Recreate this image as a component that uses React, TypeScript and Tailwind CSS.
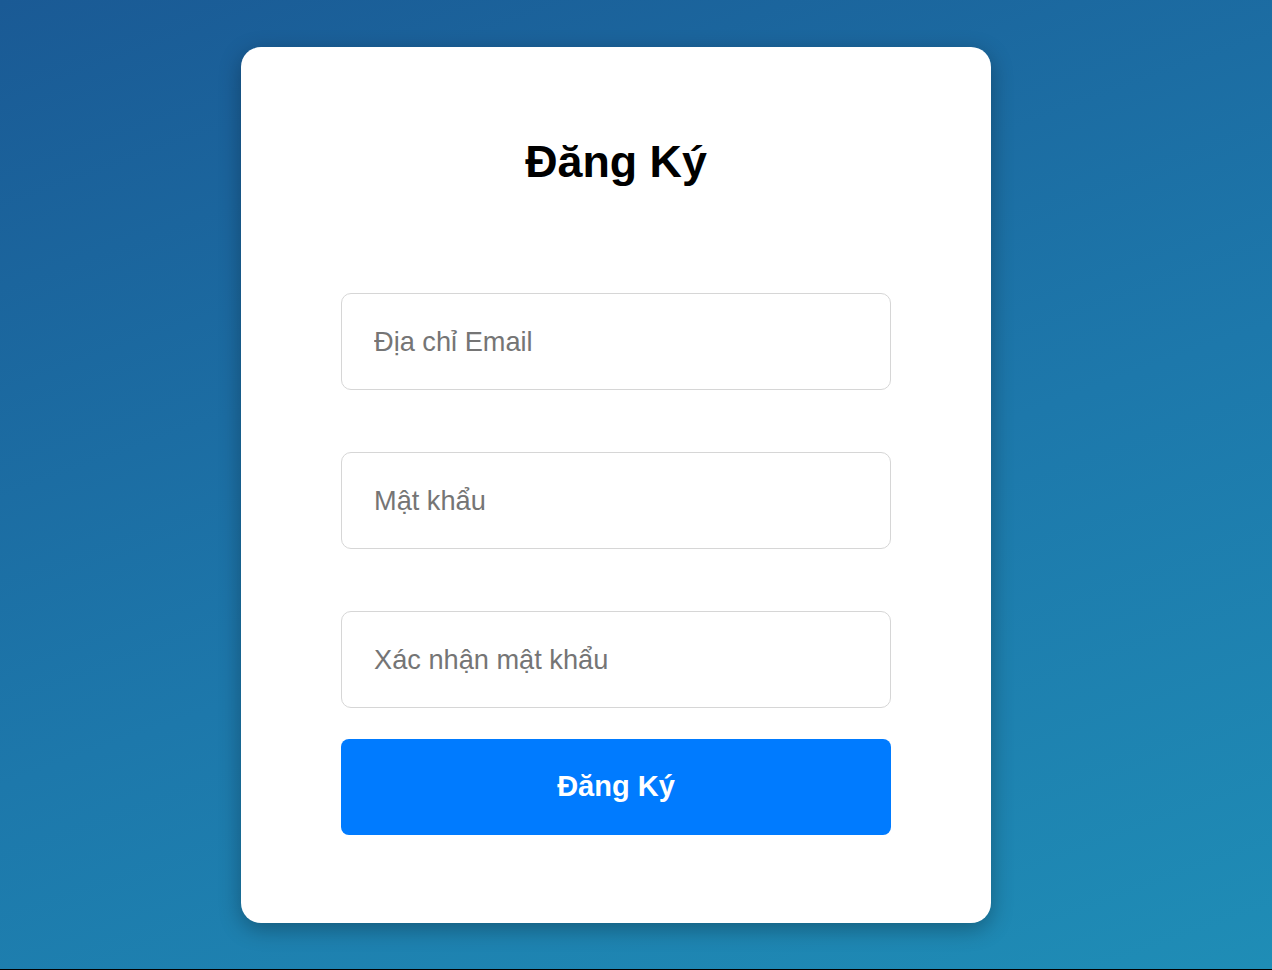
export default function App() {
  return (
    <div className="flex min-h-[970px] flex-col font-['Liberation_Sans',Arial,sans-serif]">
      <div className="h-[969px] bg-[linear-gradient(160deg,#1a5a95_0%,#1d78ab_55%,#1f8db6_100%)] pl-[241px] pt-[47px]">
        <div className="w-[750px] rounded-[20px] bg-white px-[100px] pb-[88px] pt-[90px] shadow-[0_6px_22px_rgba(0,0,0,0.3)]">
          <h1 className="text-center text-[44.8px] font-bold leading-[49px] text-black">Đăng Ký</h1>

          <form className="mt-[107px] flex flex-col" onSubmit={(e) => e.preventDefault()}>
            <input
              type="email"
              placeholder="Địa chỉ Email"
              className="h-[97px] w-full rounded-[10px] border border-[#d6d6d6] px-[32px] text-[27.2px] text-[#333] outline-none placeholder:text-[#757575]"
            />
            <input
              type="password"
              placeholder="Mật khẩu"
              className="mt-[62px] h-[97px] w-full rounded-[10px] border border-[#d6d6d6] px-[32px] text-[27.2px] text-[#333] outline-none placeholder:text-[#757575]"
            />
            <input
              type="password"
              placeholder="Xác nhận mật khẩu"
              className="mt-[62px] h-[97px] w-full rounded-[10px] border border-[#d6d6d6] px-[32px] text-[27.2px] text-[#333] outline-none placeholder:text-[#757575]"
            />
            <button
              type="submit"
              className="mt-[31px] h-[96px] w-full rounded-[8px] bg-[#007bff] text-[29px] font-bold text-white"
            >
              Đăng Ký
            </button>
          </form>
        </div>
      </div>
      <div className="h-px bg-black" />
    </div>
  );
}
